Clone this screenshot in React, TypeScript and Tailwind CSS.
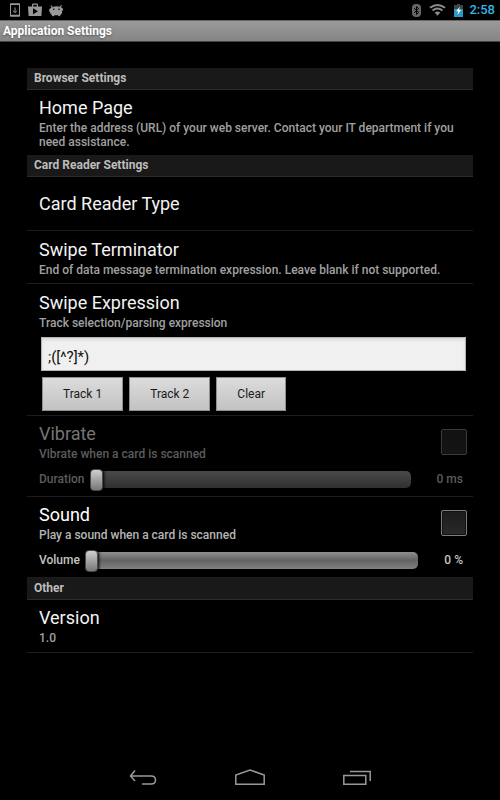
import { useState } from 'react';
import type { ReactNode } from 'react';

const ROW = 'border-b border-[#1c1c1c] pl-3 pr-[7px]';

const RANGE =
  'h-[22px] min-w-0 flex-1 appearance-none bg-transparent ' +
  '[&::-webkit-slider-runnable-track]:h-[17px] [&::-webkit-slider-runnable-track]:rounded-[5px] [&::-webkit-slider-runnable-track]:bg-linear-to-b ' +
  '[&::-webkit-slider-thumb]:-mt-[2px] [&::-webkit-slider-thumb]:h-[22px] [&::-webkit-slider-thumb]:w-[13px] [&::-webkit-slider-thumb]:appearance-none ' +
  '[&::-webkit-slider-thumb]:rounded-[4px] [&::-webkit-slider-thumb]:border [&::-webkit-slider-thumb]:border-[#4a4a4a] ' +
  '[&::-webkit-slider-thumb]:bg-linear-to-b [&::-webkit-slider-thumb]:from-[#d0d0d0] [&::-webkit-slider-thumb]:to-[#787878] ' +
  '[&::-webkit-slider-thumb]:shadow-[1px_0_3px_#000]';

function StatusBar() {
  return (
    <div className="flex h-5 items-center justify-between pl-[10px] pr-[5px]">
      <div className="flex items-center gap-[7px] text-[#999]">
        <svg width="11" height="14" viewBox="0 0 11 14" fill="none" stroke="currentColor">
          <path d="M.5 1h9v12h-9z" />
          <path d="M0 1.2h10M0 12.6h10" strokeWidth="1.6" />
          <path d="M5 4.5v5M3 7.7l2 2 2-2" />
        </svg>
        <svg width="14" height="14" viewBox="0 0 14 14" fill="currentColor">
          <path d="M0 3.5h4V1.8Q4 .5 5.2.5h3.6Q10 .5 10 1.8v1.7h4L13.4 13H.6zM5.2 3.5h3.6V1.7H5.2zM5 5.2v6L10 8.2z" fillRule="evenodd" />
        </svg>
        <svg width="15" height="13" viewBox="0 0 15 13" fill="currentColor">
          <path d="M2.2 1.2 3.8 3Q7 1.8 10.6 2.8L12.4.8l.6.5-1.3 2q2.500.4 2.300 2.200-.1 1.300-1 1.700.6 2.600-1.400 3.600-.2 1.400-1.300 1.400T9 11.200H5.500q-.5 1.200-1.500 1.100-1.100-.1-1.200-1.400Q.9 10 1.100 8.300q-1.200-.9-1-2.300Q.3 4.200 2.600 4L1.500 1.700z" />
          <circle cx="4.800" cy="5.200" r=".8" fill="#000" />
          <circle cx="10" cy="5.200" r=".8" fill="#000" />
        </svg>
      </div>
      <div className="flex items-center gap-2">
        <svg width="9" height="13" viewBox="0 0 9 13">
          <rect width="9" height="13" rx="4" fill="#666" />
          <path d="M2.2 4.2l4.4 4.3-2.1 2V2.500l2.100 2-4.400 4.300" fill="none" stroke="#000" />
        </svg>
        <svg width="17" height="12" viewBox="0 0 18 12" fill="none" stroke="#8a8a8a" strokeWidth="2">
          <path d="M1 3.700Q9-2.200 17 3.700M3.700 6.500q5.300-4 10.600 0" />
          <path d="M6 8.600q3-2 6 0L9 12z" fill="#8a8a8a" stroke="none" />
        </svg>
        <svg width="9" height="13" viewBox="0 0 9 13">
          <path d="M0 1h3V0h3v1h3v4H0z" fill="#444" />
          <path d="M0 5h9v8H0z" fill="#2c9ac4" />
          <path d="M6 2.500 2.200 7.200h2L3.500 11 7 6H5z" fill="#fff" />
        </svg>
        <span className="-ml-0.5 text-[13px] leading-5 font-medium text-[#33b5e5]">2:58</span>
      </div>
    </div>
  );
}

function SectionHeader({ children }: { children: ReactNode }) {
  return (
    <h2 className="h-[22px] border-b border-[#2c2c2c] bg-[#191919] px-[7px] text-xs leading-[21px] font-bold text-[#bdbdbd]">
      {children}
    </h2>
  );
}

function RowText({ title, summary }: { title: string; summary: string }) {
  return (
    <>
      <h3 className="text-lg leading-[23px]">{title}</h3>
      <p className="mt-0.5 text-xs leading-[14px] font-medium text-[#a0a0a0]">{summary}</p>
    </>
  );
}

type ToggleProps = {
  id: string;
  title: string;
  summary: string;
  label: string;
  unit: string;
  disabled?: boolean;
};

function ToggleRow({ id, title, summary, label, unit, disabled }: ToggleProps) {
  const [on, setOn] = useState(false);
  const [value, setValue] = useState(0);

  return (
    <div className={`${ROW} pt-[6px] pb-[6px]`}>
      <div className="flex items-center justify-between">
        <label htmlFor={id}>
          <span className={`block text-lg leading-[23px] ${disabled ? 'text-[#757575]' : 'text-white'}`}>{title}</span>
          <span className={`mt-0.5 block text-xs leading-[14px] font-medium ${disabled ? 'text-[#5c5c5c]' : 'text-[#b5b5b5]'}`}>{summary}</span>
        </label>
        <input
          id={id}
          type="checkbox"
          checked={on}
          disabled={disabled}
          onChange={(e) => setOn(e.target.checked)}
          className="-mr-px size-[26px] appearance-none rounded-[2px] border border-[#7d7d7d] bg-linear-to-b from-[#1c1c1c] to-[#292929] shadow-[inset_0_0_0_1px_#111] checked:to-[#33b5e5] disabled:border-[#3c3c3c] disabled:from-[#111] disabled:to-[#151515]"
        />
      </div>
      <div className={`mt-[7px] flex items-center text-xs font-medium ${disabled ? 'text-[#5c5c5c]' : 'text-[#c4c4c4]'}`}>
        <label htmlFor={`${id}-level`} className="pr-[5px]">{label}</label>
        <input
          id={`${id}-level`}
          type="range"
          min={0}
          max={100}
          value={value}
          disabled={disabled}
          onChange={(e) => setValue(Number(e.target.value))}
          className={`${RANGE} ${
            disabled
              ? '[&::-webkit-slider-runnable-track]:from-[#4a4a4a] [&::-webkit-slider-runnable-track]:to-[#303030]'
              : '[&::-webkit-slider-runnable-track]:from-[#8f908e] [&::-webkit-slider-runnable-track]:via-[#626461] [&::-webkit-slider-runnable-track]:to-[#81827f]'
          }`}
        />
        <output className="pr-[3px] pl-[26px]">{value} {unit}</output>
      </div>
    </div>
  );
}

const BUTTON =
  'h-[34px] border border-[#8f8f8f] bg-linear-to-b from-[#dcdcdc] to-[#c2c2c2] px-5 text-xs text-[#1a1a1a]';

export default function App() {
  const [expression, setExpression] = useState(';([^?]*)');

  return (
    <div className="flex min-h-screen flex-col bg-black font-['Roboto','Liberation_Sans',sans-serif] text-[#f3f3f3]">
      <StatusBar />
      <h1 className="h-[22px] border-t border-b border-t-[#666] border-b-[#444] bg-linear-to-b from-[#9a9a9a] to-[#858585] px-[3px] text-xs leading-5 font-bold text-white [text-shadow:0_1px_2px_#555]">
        Application Settings
      </h1>

      <main className="flex-1 px-[27px] pt-[26px]">
        <SectionHeader>Browser Settings</SectionHeader>
        <div className="pt-[6px] pr-[7px] pb-[6px] pl-3">
          <RowText
            title="Home Page"
            summary="Enter the address (URL) of your web server. Contact your IT department if you need assistance."
          />
        </div>

        <SectionHeader>Card Reader Settings</SectionHeader>
        <div className="flex h-[54px] items-center border-b border-[#1c1c1c] px-3">
          <h3 className="text-lg leading-[23px]">Card Reader Type</h3>
        </div>
        <div className={`${ROW} pt-[7px] pb-[6px]`}>
          <RowText
            title="Swipe Terminator"
            summary="End of data message termination expression. Leave blank if not supported."
          />
        </div>
        <div className={`${ROW} pt-[7px] pb-1`}>
          <RowText title="Swipe Expression" summary="Track selection/parsing expression" />
          <div className="pt-[7px] pl-[2px]">
            <input
              type="text"
              aria-label="Swipe Expression"
              value={expression}
              onChange={(e) => setExpression(e.target.value)}
              className="block h-[34px] w-full border border-[#b5b5b5] bg-[#f0f0f0] px-[6px] pt-[6px] text-[15px] text-[#111] shadow-[inset_0_2px_3px_#d8d8d8]"
            />
            <div className="mt-[6px] flex gap-[6px] pl-px">
              <button onClick={() => setExpression(';([^?]*)')} className={BUTTON}>Track 1</button>
              <button onClick={() => setExpression('%([^?]*)')} className={BUTTON}>Track 2</button>
              <button onClick={() => setExpression('')} className={BUTTON}>Clear</button>
            </div>
          </div>
        </div>
        <ToggleRow id="vibrate" title="Vibrate" summary="Vibrate when a card is scanned" label="Duration" unit="ms" disabled />
        <ToggleRow id="sound" title="Sound" summary="Play a sound when a card is scanned" label="Volume" unit="%" />

        <SectionHeader>Other</SectionHeader>
        <div className={`${ROW} pt-[6px] pb-[7px]`}>
          <RowText title="Version" summary="1.0" />
        </div>
      </main>

      <nav className="flex h-[46px] items-center justify-center gap-[78px] text-[#999]">
        <button aria-label="Back">
          <svg width="28" height="16" viewBox="0 0 28 16" fill="none" stroke="currentColor" strokeWidth="1.5">
            <path d="M6 1.500 1.500 7 6 12M1.500 7H22q4.500 0 4.500 4T22 15h-9" />
          </svg>
        </button>
        <button aria-label="Home">
          <svg width="30" height="16" viewBox="0 0 30 16" fill="none" stroke="currentColor" strokeWidth="1.5">
            <path d="M.8 15.2V6L15 1l14.200 5v9.200z" />
          </svg>
        </button>
        <button aria-label="Recent apps">
          <svg width="28" height="16" viewBox="0 0 28 16" fill="none" stroke="currentColor" strokeWidth="1.5">
            <path d="M.8 6.500h22v8.700H.8zM7 2.500h20.200v9.500" />
          </svg>
        </button>
      </nav>
    </div>
  );
}
